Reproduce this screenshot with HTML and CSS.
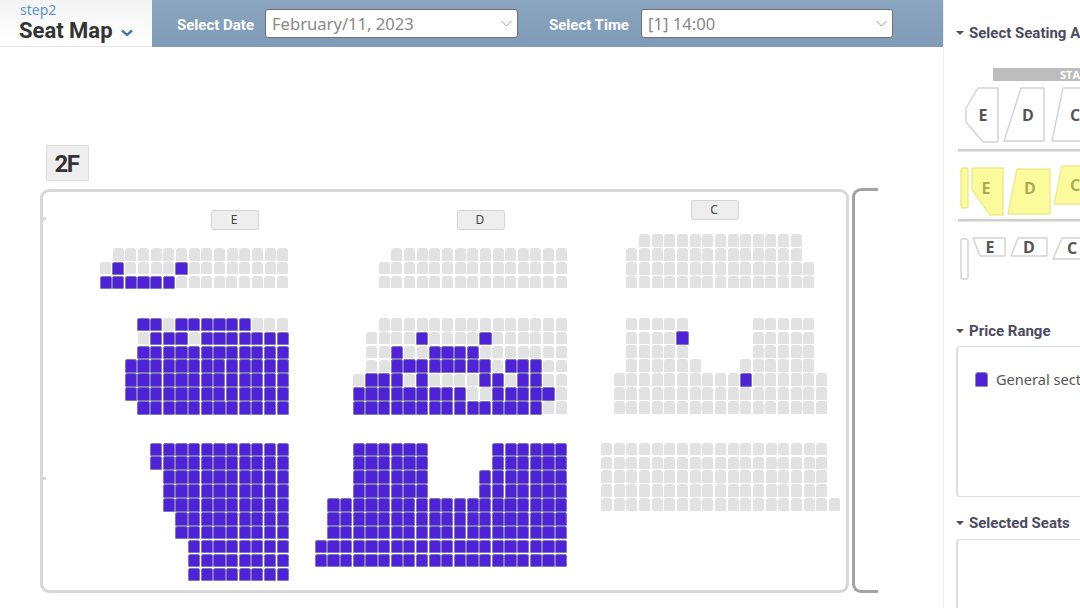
FILE: index.html
```html
<!DOCTYPE html>
<html lang="en">
<head>
  <meta charset="UTF-8">
  <title>Seat Map</title>
  <link rel="stylesheet" href="styles.css">
</head>
<body>

  <div class="page">
    <div class="main">
      <div class="header">
        <div class="step-box">
          <div class="step-label">step2</div>
          <div class="step-title">
            Seat Map
            <svg class="step-arrow" width="12" height="8" viewBox="0 0 12 8"><path d="M1 1.5l5 4.5 5-4.5" fill="none" stroke="#4a72b0" stroke-width="2.4"/></svg>
          </div>
        </div>
        <div class="picker-bar">
          <label class="picker-label">Select Date</label>
          <div class="picker picker-date">
            <span>February/11, 2023</span>
            <svg width="11" height="7" viewBox="0 0 11 7"><path d="M.5 1l5 5 5-5" fill="none" stroke="#999"/></svg>
          </div>
          <label class="picker-label picker-label-time">Select Time</label>
          <div class="picker picker-time">
            <span>[1] 14:00</span>
            <svg width="11" height="7" viewBox="0 0 11 7"><path d="M.5 1l5 5 5-5" fill="none" stroke="#999"/></svg>
          </div>
        </div>
      </div>

      <!-- Free canvas: everything in here sits at its place on the floor plan -->
      <div class="floor" id="floor">
        <div class="floor-name">2F</div>
        <div class="hall"></div>
        <div class="hall-tick tick-top"></div>
        <div class="hall-tick tick-bottom"></div>
        <div class="hall-edge"></div>
        <div class="zone zone-e">E</div>
        <div class="zone zone-d">D</div>
        <div class="zone zone-c">C</div>
      </div>
    </div>

    <div class="side">
      <div class="side-title side-title-first">Select Seating Area</div>
      <svg class="mini-map" width="340" height="225" viewBox="943 60 340 225">
        <rect x="993" y="68" width="280" height="13" fill="#bdbdbd"/>
        <text class="mini-stage" x="1060" y="79">STAGE</text>

        <g class="mini-seat">
          <polygon points="978,88 998,88 998,142 983,142 966,122 966,108"/>
          <polygon points="1021,88 1044,88 1044,141 1004,141"/>
          <polygon points="1063,88 1110,88 1110,141 1052,141"/>
        </g>
        <text class="mini-text" x="983" y="121">E</text>
        <text class="mini-text" x="1028" y="121">D</text>
        <text class="mini-text" x="1075" y="121">C</text>
        <rect x="958" y="149" width="300" height="2.5" fill="#cfcfcf"/>

        <g class="mini-seat mini-active">
          <rect x="961" y="168" width="7" height="40" rx="2"/>
          <polygon points="972,168 1003,168 1003,215 990,215 972,190"/>
          <polygon points="1017,169 1050,169 1050,214 1008,214"/>
          <polygon points="1062,166 1110,166 1110,204 1054,204"/>
        </g>
        <text class="mini-text mini-text-active" x="986" y="194">E</text>
        <text class="mini-text mini-text-active" x="1030" y="194">D</text>
        <text class="mini-text mini-text-active" x="1075" y="191">C</text>
        <rect x="958" y="219" width="300" height="2.5" fill="#cfcfcf"/>

        <g class="mini-seat">
          <rect x="961" y="239" width="7" height="40" rx="2"/>
          <polygon points="973,238 1005,238 1005,256 980,256"/>
          <polygon points="1018,238 1047,238 1047,256 1011,256"/>
          <polygon points="1062,238 1110,238 1110,259 1053,259"/>
        </g>
        <text class="mini-text" x="990" y="253">E</text>
        <text class="mini-text" x="1029" y="253">D</text>
        <text class="mini-text" x="1072" y="254">C</text>
      </svg>

      <div class="side-title side-title-price">Price Range</div>
      <div class="side-box side-box-price">
        <div class="price-row">
          <span class="price-swatch"></span>
          <span>General section</span>
        </div>
      </div>

      <div class="side-title side-title-selected">Selected Seats</div>
      <div class="side-box side-box-selected"></div>
    </div>
  </div>

  <script src="seats.js"></script>
</body>
</html>
```

FILE: styles.css
```css
body, html {
  margin: 0;
  padding: 0;
  height: 100%;
  overflow: hidden;
  font-family: Roboto, Arial, sans-serif;
  background: #fff;
}

.page {
  display: flex;
  width: 1080px;
  height: 608px;
  overflow: hidden;
}

.main {
  flex: 0 0 943px;
  display: flex;
  flex-direction: column;
}

/* Header */
.header {
  display: flex;
  height: 47px;
}

.step-box {
  flex: 0 0 152px;
  box-sizing: border-box;
  padding: 2px 0 0 19px;
  background: linear-gradient(#f4f4f4, #fff);
  border-bottom: 1px solid #e6e6e6;
}

.step-label {
  padding-left: 1px;
  font-family: "Noto Sans", sans-serif;
  font-size: 14px;
  line-height: 15px;
  color: #5b95cf;
}

.step-title {
  display: flex;
  align-items: center;
  gap: 8px;
  font-size: 22px;
  line-height: 28px;
  font-weight: bold;
  color: #333;
}

.step-arrow {
  margin-top: 4px;
}

.picker-bar {
  flex: 1;
  display: flex;
  align-items: center;
  padding: 0 0 0 25px;
  background: linear-gradient(#8aa5be, #7f9bb8);
}

.picker-label {
  padding-top: 3px;
  font-size: 15px;
  font-weight: bold;
  color: #fff;
  margin-right: 11px;
}

.picker-label-time {
  margin-left: 31px;
  margin-right: 12px;
}

.picker {
  display: flex;
  align-items: center;
  justify-content: space-between;
  box-sizing: border-box;
  height: 29px;
  padding: 0 5px 0 6px;
  background: #fff;
  border: 1px solid #6f6f6f;
  border-radius: 3px;
  font-family: "Noto Sans", sans-serif;
  font-size: 16.6px;
  color: #888;
}

.picker-date {
  width: 253px;
}

.picker-time {
  width: 252px;
}

/* Floor plan */
.floor {
  flex: 1;
  position: relative;
}

.floor-name {
  position: absolute;
  left: 46px;
  top: 98px;
  box-sizing: border-box;
  width: 43px;
  height: 36px;
  padding-right: 2px;
  line-height: 36px;
  text-align: center;
  font-size: 24px;
  font-weight: bold;
  letter-spacing: -1.5px;
  color: #333;
  background: #eee;
  border: 1px solid #ddd;
}

.hall {
  position: absolute;
  left: 40px;
  top: 142px;
  box-sizing: border-box;
  width: 809px;
  height: 404px;
  border: 3px solid #d8d8d8;
  border-radius: 9px;
}

.hall-tick {
  position: absolute;
  left: 43px;
  width: 3px;
  height: 3px;
  background: #d8d8d8;
}

.tick-top {
  top: 170px;
}

.tick-bottom {
  top: 430px;
}

.hall-edge {
  position: absolute;
  left: 852px;
  top: 141px;
  box-sizing: border-box;
  width: 26px;
  height: 405px;
  border: 3px solid #a3a3a3;
  border-right: none;
  border-radius: 9px 0 0 9px;
}

.zone {
  position: absolute;
  box-sizing: border-box;
  width: 48px;
  height: 20px;
  padding-right: 2px;
  line-height: 18px;
  text-align: center;
  font-family: "Noto Sans", sans-serif;
  font-size: 12px;
  color: #444;
  background: #eee;
  border: 1px solid #d4d4d4;
  border-radius: 3px;
}

.zone-e {
  left: 211px;
  top: 163px;
}

.zone-d {
  left: 457px;
  top: 163px;
}

.zone-c {
  left: 691px;
  top: 153px;
}

/* Seat blocks, one per section and tier */
.block {
  position: absolute;
}

.block-e1 { left: 100px; top: 201px; }
.block-e2 { left: 100px; top: 271px; }
.block-e3 { left: 100px; top: 395.7px; }
.block-d1 { left: 353.3px; top: 201px; }
.block-d2 { left: 353.3px; top: 271px; }
.block-d3 { left: 315.3px; top: 395.7px; }
.block-c1 { left: 613.6px; top: 187.3px; }
.block-c2 { left: 613.6px; top: 270.7px; }
.block-c3 { left: 601px; top: 395.7px; }

.seat-row {
  display: flex;
  height: 13.9px;
}

.cell {
  flex: 0 0 12.66px;
}

.seat {
  box-sizing: border-box;
  flex: 0 0 11px;
  height: 12.5px;
  margin-right: 1.66px;
  background: #e2e2e2;
  border-radius: 3px 3px 1px 1px;
}

.seat.taken {
  flex: 0 0 12.2px;
  height: 13.6px;
  margin: -0.2px 0.96px 0 -0.5px;
  background: #4d22d8;
  border: 1px solid #8379b2;
  border-radius: 2px 2px 1px 1px;
}

/* Right panel */
.side {
  flex: 0 0 340px;
  box-sizing: border-box;
  border-left: 1px solid #eee;
}

.mini-map {
  display: block;
  margin-left: -1px;
}

.mini-stage {
  font-family: "Open Sans", sans-serif;
  font-size: 11px;
  font-weight: bold;
  fill: #fff;
}

.mini-seat {
  fill: #fff;
  stroke: #d2d2d2;
  stroke-width: 1.4;
  stroke-linejoin: round;
}

.mini-active {
  fill: #fbfb9b;
  stroke: #ecec8e;
}

.mini-text {
  font-family: "Open Sans", sans-serif;
  font-size: 16px;
  font-weight: bold;
  text-anchor: middle;
  fill: #555;
}

.mini-text-active {
  fill: #abab55;
}

.side-title {
  display: flex;
  align-items: center;
  gap: 5px;
  height: 18px;
  margin-left: 12px;
  font-size: 15px;
  font-weight: bold;
  color: #4b4b60;
}

.side-title::before {
  content: "";
  border-top: 4px solid #4b4b60;
  border-left: 4px solid transparent;
  border-right: 4px solid transparent;
}

.side-title-first {
  margin-top: 24px;
  margin-bottom: 18px;
}

.side-title-price {
  margin-top: 37px;
}

.side-title-selected {
  margin-top: 17px;
}

.side-box {
  box-sizing: border-box;
  margin: 6px 0 0 12px;
  width: 320px;
  background: #fff;
  border: 1px solid #ddd;
  border-left-width: 2px;
  border-radius: 4px;
}

.side-box-price {
  height: 151px;
  padding: 22px 0 0 17px;
}

.side-box-selected {
  margin-top: 7px;
  height: 150px;
}

.price-row {
  display: flex;
  align-items: center;
  gap: 8px;
  font-family: "Noto Sans", sans-serif;
  font-size: 14.6px;
  color: #555;
}

.price-swatch {
  box-sizing: border-box;
  width: 13px;
  height: 15px;
  background: #4d22d8;
  border: 1px solid #8d84bb;
  border-radius: 3px 3px 1px 1px;
}
```

FILE: seats.js
```js
// . = no seat, o = free seat, x = taken seat
var blocks = [
  { cls: 'block-e1', rows: [
    '.oooooooooooooo',
    'oxooooxoooooooo',
    'xxxxxxooooooooo'
  ] },
  { cls: 'block-e2', rows: [
    '...xxoxxxxxxooo',
    '...oxxxoxxxxxxx',
    '...xxxxxxxxxxxx',
    '..xxxxxxxxxxxxx',
    '..xxxxxxxxxxxxx',
    '..xxxxxxxxxxxxx',
    '...xxxxxxxxxxxx'
  ] },
  { cls: 'block-e3', rows: [
    '....xxxxxxxxxxx',
    '....xxxxxxxxxxx',
    '.....xxxxxxxxxx',
    '.....xxxxxxxxxx',
    '.....xxxxxxxxxx',
    '......xxxxxxxxx',
    '......xxxxxxxxx',
    '.......xxxxxxxx',
    '.......xxxxxxxx',
    '.......xxxxxxxx'
  ] },
  { cls: 'block-d1', rows: [
    '...oooooooooooooo',
    '..ooooooooooooooo',
    '..ooooooooooooooo'
  ] },
  { cls: 'block-d2', rows: [
    '..ooooooooooooooo',
    '.ooooxooooxoooooo',
    '.ooxooxxxxooooooo',
    '.ooxxxxxxxxoxxxoo',
    'oxxxoxooooxxoxxoo',
    'xxxxxxxxxooxxxxxo',
    'xxxxxxxxxxxxxxxoo'
  ] },
  { cls: 'block-d3', rows: [
    '...xxxxxx.....xxxxxx',
    '...xxxxxx.....xxxxxx',
    '...xxxxxx....xxxxxxx',
    '...xxxxxx....xxxxxxx',
    '.xxxxxxxxxxxxxxxxxxx',
    '.xxxxxxxxxxxxxxxxxxx',
    '.xxxxxxxxxxxxxxxxxxx',
    'xxxxxxxxxxxxxxxxxxxx',
    'xxxxxxxxxxxxxxxxxxxx'
  ] },
  { cls: 'block-c1', rows: [
    '..ooooooooooooo..',
    '.oooooooooooooo..',
    '.ooooooooooooooo.',
    '.ooooooooooooooo.'
  ] },
  { cls: 'block-c2', rows: [
    '.ooooo.....ooooo.',
    '.oooox.....ooooo.',
    '.ooooo.....ooooo.',
    '.oooooo...oooooo.',
    'ooooooooooxoooooo',
    'ooooooooooooooooo',
    'ooooooooooooooooo'
  ] },
  { cls: 'block-c3', rows: [
    'oooooooooooooooooo',
    'oooooooooooooooooo',
    'oooooooooooooooooo',
    'oooooooooooooooooo',
    'ooooooooooooooooooo'
  ] }
];

var classes = { '.': 'cell', 'o': 'seat', 'x': 'seat taken' };
var floor = document.getElementById('floor');

blocks.forEach(function(block) {
  var blockEl = document.createElement('div');
  blockEl.className = 'block ' + block.cls;
  block.rows.forEach(function(row) {
    var rowEl = document.createElement('div');
    rowEl.className = 'seat-row';
    row.split('').forEach(function(ch) {
      var cell = document.createElement('span');
      cell.className = classes[ch];
      rowEl.appendChild(cell);
    });
    blockEl.appendChild(rowEl);
  });
  floor.appendChild(blockEl);
});
```
